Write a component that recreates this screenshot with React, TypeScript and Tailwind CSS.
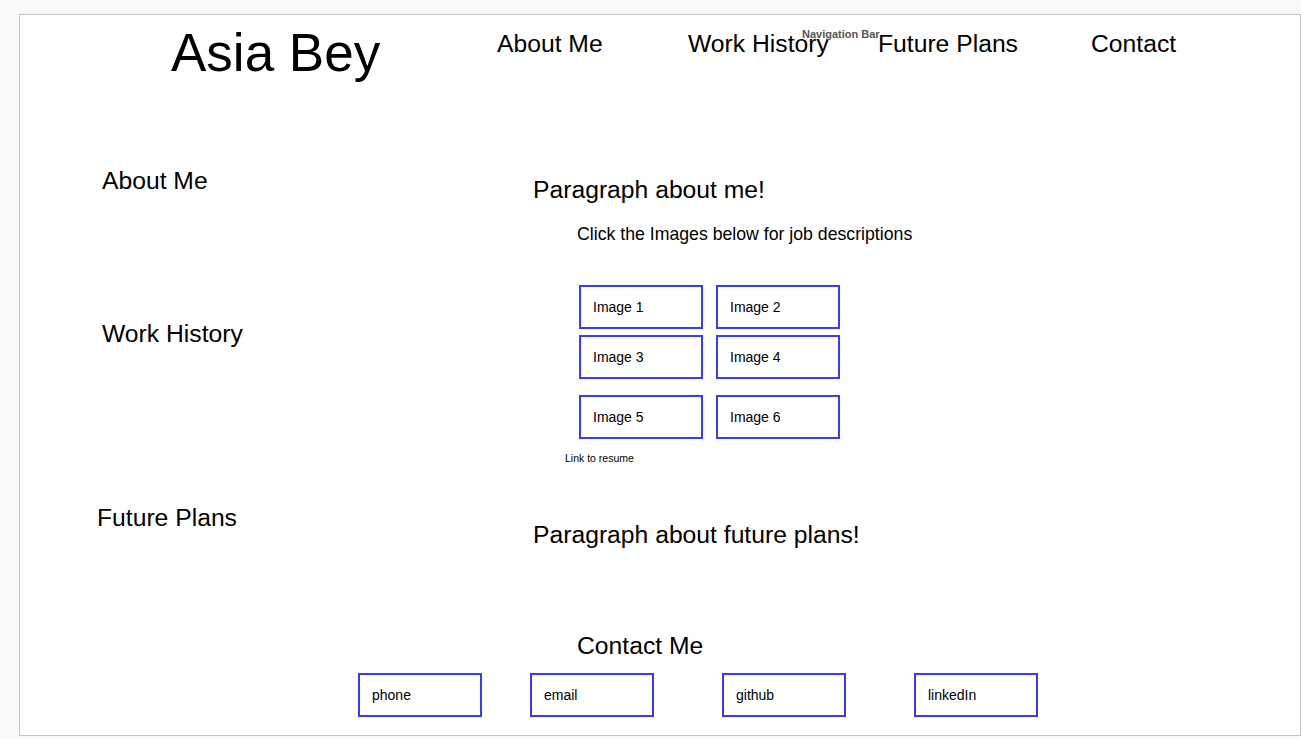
import React from "react";

const Box = ({ label }: { label: string }) => (
  <div className="flex h-[44px] w-[124px] items-center border-2 border-[#3a3aff] bg-white pl-[12px] text-[14px] leading-none text-black">
    {label}
  </div>
);

export default function App() {
  return (
    <div className="min-h-screen bg-[#f8f9fb] pl-[19px] pt-[14px] font-['Liberation_Sans',Arial,sans-serif] text-black">
      <div className="relative h-[722px] w-[1282px] border border-[#c4c4c4] bg-white">
        {/* Header */}
        <div className="flex items-start">
          <div className="ml-[151px] mt-[11px] w-[326px] text-[53px] leading-none">Asia Bey</div>
          <nav className="mt-[17px] flex text-[24.7px] leading-none text-black">
            <a className="w-[191px]">About Me</a>
            <a className="w-[190px]">Work History</a>
            <a className="w-[213px]">Future Plans</a>
            <a>Contact</a>
          </nav>
        </div>
        <span className="absolute left-[782px] top-[14px] text-[11px] font-bold leading-none text-[#555]">
          Navigation Bar
        </span>

        {/* About row */}
        <div className="mt-[90px] flex">
          <div className="w-[513px] pl-[82px]">
            <h2 className="text-[24.7px] leading-none">About Me</h2>
          </div>
          <div className="mt-[9px]">
            <p className="text-[24.7px] leading-none">Paragraph about me!</p>
            <p className="ml-[44px] mt-[23px] text-[17.7px] leading-none">
              Click the Images below for job descriptions
            </p>
          </div>
        </div>

        {/* Work history row */}
        <div className="mt-[42px] flex">
          <div className="w-[513px] pl-[82px]">
            <h2 className="mt-[37px] text-[24.7px] leading-none">Work History</h2>
          </div>
          <div>
            <div className="ml-[46px] flex flex-col">
              <div className="flex gap-x-[13px]">
                <Box label="Image 1" />
                <Box label="Image 2" />
              </div>
              <div className="mt-[6px] flex gap-x-[13px]">
                <Box label="Image 3" />
                <Box label="Image 4" />
              </div>
              <div className="mt-[16px] flex gap-x-[13px]">
                <Box label="Image 5" />
                <Box label="Image 6" />
              </div>
            </div>
            <a className="ml-[32px] mt-[14px] block text-[10.5px] leading-none text-black">Link to resume</a>
          </div>
        </div>

        {/* Future plans row */}
        <div className="mt-[40px] flex">
          <div className="w-[513px] pl-[77px]">
            <h2 className="mt-[2px] text-[24.7px] leading-none">Future Plans</h2>
          </div>
          <div className="mt-[19px]">
            <p className="text-[24.7px] leading-none">Paragraph about future plans!</p>
          </div>
        </div>

        {/* Contact */}
        <h2 className="ml-[557px] mt-[86px] text-[24.7px] leading-none">Contact Me</h2>
        <div className="ml-[338px] mt-[15px] flex">
          <Box label="phone" />
          <div className="ml-[48px]">
            <Box label="email" />
          </div>
          <div className="ml-[68px]">
            <Box label="github" />
          </div>
          <div className="ml-[68px]">
            <Box label="linkedIn" />
          </div>
        </div>
      </div>
    </div>
  );
}
